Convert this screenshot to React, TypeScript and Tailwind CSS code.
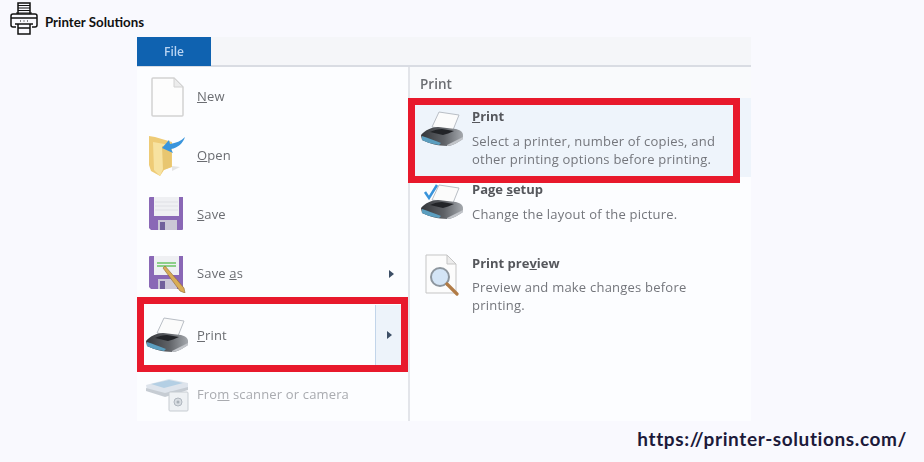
import type { ReactNode } from "react";

function LogoIcon() {
  return (
    <svg width="28" height="33" viewBox="0 0 28 33" fill="none" stroke="#111" strokeWidth="1.5">
      <path d="M8 12V1h12v11" />
      <path d="M8 3.5h12M8 6h12M8 8.5h12M6 11h16" strokeWidth="1.2" />
      <path d="M6 25H3a2 2 0 0 1-2-2V14a2 2 0 0 1 2-2h22a2 2 0 0 1 2 2v9a2 2 0 0 1-2 2h-3" />
      <path d="M1 16h26" />
      <path d="M5 22h18" />
      <path d="M8 22v10h12V22M8 26h12" />
      <path d="M10.500 18.500v1M14 18.500v1M17.500 18.500v1" strokeWidth="1" />
    </svg>
  );
}

function PageIcon() {
  return (
    <svg width="33" height="40" viewBox="0 0 33 40">
      <path d="M2 1h21l9 9v28a1 1 0 0 1-1 1H2a1 1 0 0 1-1-1V2a1 1 0 0 1 1-1z" fill="#fdfdfd" stroke="#d2d2d2" strokeWidth="1.5" />
      <path d="M23 1v9h9z" fill="#ececec" stroke="#d2d2d2" />
    </svg>
  );
}

function FolderIcon() {
  return (
    <svg width="38" height="43" viewBox="0 0 38 43">
      <path d="M1 2l6 1 17 5v25l-8 3-4 6-9-5-2-6z" fill="#eecb76" />
      <path d="M5 8l17 3v22l-7 2-3 7-6-6z" fill="#f7e2a0" />
      <path d="M14 12l1 24 8-3V13z" fill="#e8c670" />
      <path d="M24 32l8 1-8 4z" fill="#d9d9d9" opacity="0.7" />
      <path d="M37 3c-2 6-7 11-14 12l2 4-11-5 7-8 1 4c6-1 11-3 15-7z" fill="#3a95dc" />
    </svg>
  );
}

function FloppyIcon({ pencil }: { pencil?: boolean }) {
  return (
    <svg width="38" height="38" viewBox="0 0 38 38">
      <path d="M2 1h33v32a1 1 0 0 1-1 1H3l-2-2V2a1 1 0 0 1 1-1z" fill="#8a68b6" />
      <rect x="6" y="1" width="25" height="19" fill="#eff0f3" />
      {pencil ? (
        <path d="M9 8h19M9 11h19" stroke="#8ccf88" strokeWidth="2" />
      ) : (
        <path d="M7 6h23M7 10h23M7 14h23" stroke="#dfe0e5" strokeWidth="1" />
      )}
      <rect x="10" y="24" width="19" height="10" fill="#cbc7d6" />
      <rect x="12" y="26" width="5" height="8" fill="#71609b" />
      {pencil && <path d="M15 13l2-2 19 22 1 5-5-2z" fill="#d9ad55" stroke="#8f6434" strokeWidth="0.6" />}
    </svg>
  );
}

function PrinterIcon({ check }: { check?: boolean }) {
  return (
    <svg width="44" height="37" viewBox="0 0 44 37">
      <defs>
        <linearGradient id="printerBody" x1="0" x2="1" y1="0" y2="0">
          <stop offset="0" stopColor="#34363a" />
          <stop offset="0.55" stopColor="#5f6267" />
          <stop offset="1" stopColor="#a5a9ae" />
        </linearGradient>
      </defs>
      <path d="M19 2l20 3-6 15-21-3z" fill="#fbfbfb" stroke="#b9bec5" strokeWidth="1" />
      <path d="M1 25C5 20 12 17 18 17l18 2c4 1 7 3 7 6v4c-6 4-11 7-16 7-9 0-19-3-25-6z" fill="url(#printerBody)" />
      <path d="M10 22c4-2 8-3 12-3l12 2c-4 2-8 3-11 4z" fill="#222428" />
      <path d="M2 26c6 2 12 4 19 7l-2 2C12 34 6 32 2 30z" fill="#5b9ebf" />
      <path d="M27 35l16-8v2c-6 4-11 7-16 7z" fill="#c2c5ca" />
      {check && <path d="M5 9l4 6 8-13" fill="none" stroke="#3893db" strokeWidth="2.5" />}
    </svg>
  );
}

function ScannerIcon() {
  return (
    <svg width="44" height="34" viewBox="0 0 44 34" opacity="0.65">
      <path d="M1 7l23-6 19 4v5L20 16 2 12z" fill="#cfd8e2" />
      <path d="M6 6l18-4 14 3-19 5z" fill="#8fb8d6" />
      <path d="M1 10l19 5 23-6v3l-23 7-19-6z" fill="#aab3bd" />
      <rect x="24" y="14" width="19" height="19" rx="1" fill="#e7ebef" stroke="#a9b1ba" />
      <circle cx="33" cy="24" r="4" fill="#c5ccd4" stroke="#87919c" />
      <circle cx="33" cy="24" r="1.500" fill="#7c8792" />
    </svg>
  );
}

function PreviewIcon() {
  return (
    <svg width="34" height="42" viewBox="0 0 34 42">
      <path d="M1 1h21l9 9v29H1z" fill="#fcfcfc" stroke="#c5c5c5" />
      <path d="M22 1v9h9z" fill="#ececec" stroke="#c5c5c5" />
      <circle cx="15" cy="23" r="9" fill="#d4e5f6" stroke="#8d969e" strokeWidth="2" />
      <path d="M22 30l10 10" stroke="#b17b45" strokeWidth="3.200" strokeLinecap="round" />
    </svg>
  );
}

function Arrow() {
  return <span className="block w-0 h-0 border-y-[4px] border-y-transparent border-l-[5px] border-l-[#3d4f66]" />;
}

function MenuRow({
  icon,
  label,
  rowClass,
  arrow,
  muted,
}: {
  icon: ReactNode;
  label: ReactNode;
  rowClass: string;
  arrow?: boolean;
  muted?: boolean;
}) {
  return (
    <div className={`flex items-center ${rowClass}`}>
      <div className="w-[60px] flex justify-center items-center shrink-0">{icon}</div>
      <span className={`text-[13px] tracking-[0.15px] ${muted ? "text-[#a9abb0]" : "text-[#6b6d72]"}`}>{label}</span>
      {arrow && (
        <div className="ml-auto w-[33px] flex justify-center">
          <Arrow />
        </div>
      )}
    </div>
  );
}

function Option({
  icon,
  title,
  desc,
  rowClass,
  iconClass,
  descClass,
}: {
  icon: ReactNode;
  title: ReactNode;
  desc: ReactNode;
  rowClass: string;
  iconClass: string;
  descClass: string;
}) {
  return (
    <div className={`flex ${rowClass}`}>
      <div className={`w-[62px] shrink-0 flex justify-center pl-[2px] ${iconClass}`}>{icon}</div>
      <div>
        <div className="text-[13px] leading-[18px] font-bold text-[#55575c]">{title}</div>
        <div className={`text-[13px] leading-[18px] text-[#74767c] tracking-[0.22px] ${descClass}`}>{desc}</div>
      </div>
    </div>
  );
}

export default function App() {
  return (
    <div className="relative w-[924px] h-[462px] overflow-hidden bg-[#f9f9fe] font-['Open_Sans',sans-serif]">
      <header className="h-[37px] flex items-center pl-[10px] gap-[7px]">
        <LogoIcon />
        <span className="font-['Lato',sans-serif] font-bold text-[13.300px] text-[#111] mt-[8px]">Printer Solutions</span>
      </header>

      <div className="ml-[137px] w-[614px] h-[384px] bg-[#fcfdff] flex flex-col blur-[0.5px]">
        <div className="h-[30px] shrink-0 flex bg-[#f5f6f9] border-b-2 border-[#d9dce3]">
          <div className="w-[74px] h-[29px] bg-[#0f62b0] text-[#b9d4f2] text-[12px] font-semibold flex items-center justify-center">
            File
          </div>
        </div>
        <div className="flex-1 flex min-h-0">
          <div className="w-[273px] shrink-0 border-r-2 border-[#e3e5ea] flex flex-col">
            <MenuRow rowClass="h-[59px]" icon={<PageIcon />} label={<><u>N</u>ew</>} />
            <MenuRow rowClass="h-[59px]" icon={<FolderIcon />} label={<><u>O</u>pen</>} />
            <MenuRow rowClass="h-[59px]" icon={<FloppyIcon />} label={<><u>S</u>ave</>} />
            <MenuRow rowClass="h-[59px]" icon={<FloppyIcon pencil />} label={<>Save <u>a</u>s</>} arrow />
            <div className="h-[62px] flex items-center">
              <div className="w-[60px] flex justify-center shrink-0">
                <PrinterIcon />
              </div>
              <span className="text-[13px] tracking-[0.15px] text-[#6b6d72] pt-[3px]"><u>P</u>rint</span>
              <div className="ml-auto mr-[6px] w-[27px] h-[60px] mt-[2px] flex items-center justify-center bg-[#edf3fa] border-l border-[#c2d5ea]">
                <Arrow />
              </div>
            </div>
            <MenuRow rowClass="flex-1 pt-[4px]" icon={<ScannerIcon />} label={<>Fro<u>m</u> scanner or camera</>} muted />
          </div>

          <div className="flex-1 min-w-0">
            <div className="h-[31px] flex items-center pl-[10px] pt-[4px] text-[13.500px] font-semibold text-[#6b6d72] bg-[#f9fafc]">
              Print
            </div>
            <div className="h-[79px] bg-[#eef4fb] pt-[9px]">
              <Option
                rowClass=""
                iconClass="pt-[3px]"
                descClass="mt-[7px]"
                icon={<PrinterIcon />}
                title={<><u>P</u>rint</>}
                desc={<>Select a printer, number of copies, and<br />other printing options before printing.</>}
              />
            </div>
            <Option
              rowClass="h-[73px] mt-[3px]"
              iconClass="pt-[3px]"
              descClass="mt-[7px]"
              icon={<PrinterIcon check />}
              title={<>Page <u>s</u>etup</>}
              desc="Change the layout of the picture."
            />
            <Option
              rowClass="mt-[1px]"
              iconClass=""
              descClass="mt-[6px]"
              icon={<PreviewIcon />}
              title={<>Print pre<u>v</u>iew</>}
              desc={<>Preview and make changes before<br />printing.</>}
            />
          </div>
        </div>
      </div>

      <div className="absolute left-[137px] top-[297px] w-[271px] h-[75px] border-[7px] border-[#e8192c]" />
      <div className="absolute left-[408px] top-[98px] w-[332px] h-[85px] border-[7px] border-[#e8192c]" />

      <div className="absolute right-[17px] bottom-[11px] font-['Lato',sans-serif] font-bold text-[19px] leading-[24px] tracking-[0.6px] text-[#1c1a3a]">
        https://printer-solutions.com/
      </div>
    </div>
  );
}
